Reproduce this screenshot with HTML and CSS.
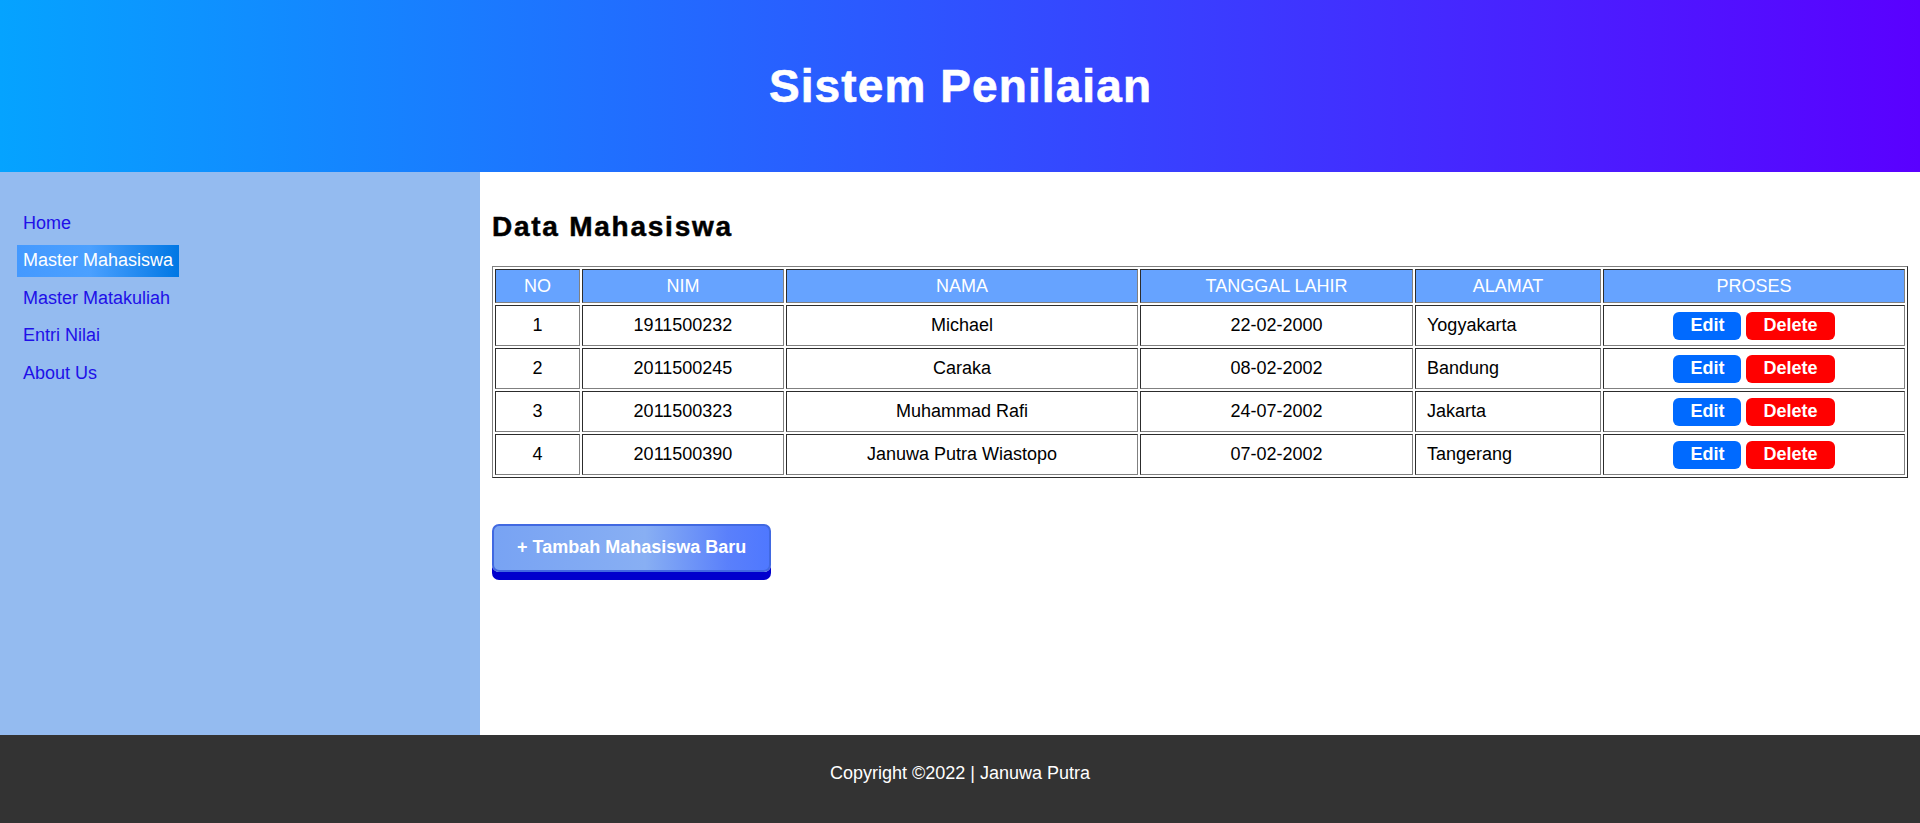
FILE: index.html
```html
<!DOCTYPE html>
<html lang="id">
<head>
<meta charset="utf-8">
<title>Sistem Penilaian</title>
<link rel="stylesheet" href="styles.css">
</head>
<body>
<header class="site-header">
  <h1 class="site-title">Sistem Penilaian</h1>
</header>
<div class="layout">
  <nav class="sidebar">
    <ul class="menu">
      <li><a class="menu-link" href="#">Home</a></li>
      <li><a class="menu-link active" href="#">Master Mahasiswa</a></li>
      <li><a class="menu-link" href="#">Master Matakuliah</a></li>
      <li><a class="menu-link" href="#">Entri Nilai</a></li>
      <li><a class="menu-link" href="#">About Us</a></li>
    </ul>
  </nav>
  <main class="content">
    <h2 class="page-title">Data Mahasiswa</h2>
    <table class="data-table">
      <thead>
        <tr>
          <th class="col-no">NO</th>
          <th class="col-nim">NIM</th>
          <th class="col-nama">NAMA</th>
          <th class="col-tgl">TANGGAL LAHIR</th>
          <th class="col-alamat">ALAMAT</th>
          <th class="col-proses">PROSES</th>
        </tr>
      </thead>
      <tbody>
        <tr>
          <td>1</td><td>1911500232</td><td>Michael</td><td>22-02-2000</td><td class="left">Yogyakarta</td>
          <td><a class="btn btn-edit" href="#">Edit</a> <a class="btn btn-delete" href="#">Delete</a></td>
        </tr>
        <tr>
          <td>2</td><td>2011500245</td><td>Caraka</td><td>08-02-2002</td><td class="left">Bandung</td>
          <td><a class="btn btn-edit" href="#">Edit</a> <a class="btn btn-delete" href="#">Delete</a></td>
        </tr>
        <tr>
          <td>3</td><td>2011500323</td><td>Muhammad Rafi</td><td>24-07-2002</td><td class="left">Jakarta</td>
          <td><a class="btn btn-edit" href="#">Edit</a> <a class="btn btn-delete" href="#">Delete</a></td>
        </tr>
        <tr>
          <td>4</td><td>2011500390</td><td>Januwa Putra Wiastopo</td><td>07-02-2002</td><td class="left">Tangerang</td>
          <td><a class="btn btn-edit" href="#">Edit</a> <a class="btn btn-delete" href="#">Delete</a></td>
        </tr>
      </tbody>
    </table>
    <a class="btn-add" href="#">+ Tambah Mahasiswa Baru</a>
  </main>
</div>
<footer class="site-footer">
  <p class="copyright">Copyright ©2022 | Januwa Putra</p>
</footer>
</body>
</html>
```

FILE: styles.css
```css
* { box-sizing: border-box; }

html, body {
  margin: 0;
  padding: 0;
}

body {
  font-family: "Liberation Sans", Arial, sans-serif;
  font-size: 18px;
  color: #000;
  background: #fff;
}

.site-header {
  height: 172px;
  background: linear-gradient(to right, #05a3ff, #5a00ff);
  display: flex;
  align-items: center;
  justify-content: center;
}

.site-title {
  margin: 0;
  color: #fff;
  font-size: 46px;
  font-weight: bold;
  letter-spacing: 1.1px;
  line-height: 52px;
  padding-left: 1.1px;
  -webkit-text-stroke: 0.6px #fff;
}

.layout {
  display: flex;
  height: 563px;
}

.sidebar {
  width: 480px;
  flex: none;
  background: #94bbf0;
  padding: 35px 0 0 17px;
}

.menu {
  list-style: none;
  margin: 0;
  padding: 0;
  display: flex;
  flex-direction: column;
  align-items: flex-start;
  gap: 5.6px;
}

.menu-link {
  display: inline-block;
  padding: 5.5px 6px;
  line-height: 21px;
  color: #2010e8;
  text-decoration: none;
  font-size: 18px;
}

.menu-link.active {
  color: #fff;
  background: linear-gradient(to right, #4499ff, #4ba0ff 45%, #0077e4);
}

.content {
  flex: 1;
  padding: 39px 12px 0 12px;
}

.page-title {
  margin: 0 0 24px;
  font-size: 28px;
  line-height: 31px;
  letter-spacing: 1.75px;
  font-weight: bold;
  -webkit-text-stroke: 0.5px #000;
}

.data-table {
  width: 100%;
  table-layout: fixed;
  border-collapse: separate;
  border-spacing: 2px;
  border: 1px outset #808080;
}

.data-table th,
.data-table td {
  border: 1px inset #808080;
  padding: 5.5px 11px;
  line-height: 21px;
  font-size: 18px;
  text-align: center;
  vertical-align: middle;
}

.data-table th {
  background: #66a3ff;
  color: #fff;
  font-weight: normal;
}

.data-table td.left { text-align: left; }

.col-no { width: 85px; }
.col-nim { width: 202px; }
.col-nama { width: 352px; }
.col-tgl { width: 273px; }
.col-alamat { width: 186px; }
.col-proses { width: 302px; }

.btn {
  display: inline-block;
  vertical-align: middle;
  padding: 3.5px 17px;
  line-height: 21px;
  border-radius: 6px;
  color: #fff;
  font-weight: bold;
  font-size: 18px;
  text-decoration: none;
}

.btn-edit { background: #006aff; }
.btn-delete { background: #ff0000; }

.btn-add {
  display: inline-block;
  margin-top: 45.5px;
  padding: 11.5px 23px;
  line-height: 21px;
  font-size: 18px;
  font-weight: bold;
  color: #fff;
  text-decoration: none;
  border: 2.25px solid #4169e1;
  border-radius: 7px;
  background: linear-gradient(to right, #78a3f3, #88aff3 55%, #5a80fb 85%, #4f78ff);
  box-shadow: 0 8px 0 #0000cd;
}

.site-footer {
  height: 88px;
  background: #333;
  color: #fff;
  text-align: center;
  padding-top: 27.5px;
}

.copyright {
  margin: 0;
  font-size: 18px;
  line-height: 21px;
}
```
